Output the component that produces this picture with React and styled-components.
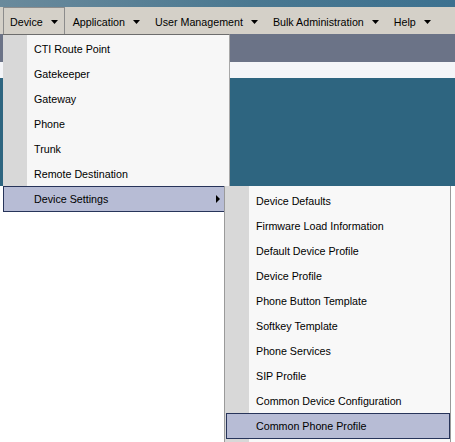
import styled, { createGlobalStyle, css } from 'styled-components'

const GlobalStyle = createGlobalStyle`
  html, body {
    margin: 0;
    padding: 0;
  }
  body {
    width: 455px;
    height: 442px;
    overflow: hidden;
    background: #fff;
    font-family: "Liberation Sans", Arial, sans-serif;
  }
`

const Page = styled.div`
  display: flex;
  flex-direction: column;
  height: 442px;
`

const TitleStrip = styled.div`
  height: 7px;
  background: linear-gradient(90deg, #6a8a9c, #4a7891 55%, #3c7190);
`

const MenuBar = styled.nav`
  height: 27px;
  display: flex;
  align-items: stretch;
  padding-left: 3px;
  background: #d4d0c8;
  position: relative;
  z-index: 2;
`

const BarItem = styled.div`
  position: relative;
  display: flex;
  align-items: center;
  gap: 8px;
  padding: 1px 6px 0;
  margin-right: 1px;
  font-size: 10.7px;
  color: #000;
  white-space: nowrap;
  border: 1px solid ${({ $open }) => ($open ? '#8c8c8c' : 'transparent')};
  border-bottom: none;
`

const DownArrow = () => (
  <svg width="7" height="4" viewBox="0 0 7 4">
    <polygon points="0,0 7,0 3.5,4" fill="#000" />
  </svg>
)

const HeaderBand = styled.div`
  height: 28px;
  background: #6b7387;
`

const WhiteBand = styled.div`
  height: 16px;
  background: #f4f5f8;
`

const Banner = styled.div`
  height: 108px;
  background: #2e6580;
`

const Body = styled.div`
  flex: 1;
  background: #fff;
`

const Dropdown = styled.div`
  position: absolute;
  top: 100%;
  left: -1px;
  width: 227px;
  box-sizing: border-box;
  padding-top: 1px;
  background: linear-gradient(90deg, #d8d8d8 24px, #f7f7f7 24px);
  border-top: 1px solid #6d6d6d;
  border-right: 1px solid #a8a8a8;
`

const Submenu = styled.div`
  position: absolute;
  top: -1px;
  left: 220px;
  width: 227px;
  box-sizing: border-box;
  padding: 2px 0 6px;
  background: linear-gradient(90deg, #d8d8d8 24px, #f8f8f8 24px);
  border-left: 1px solid #9a9a9a;
  border-right: 1px solid #9a9a9a;
`

const MenuItem = styled.div`
  position: relative;
  height: 25px;
  line-height: 23px;
  padding: 2px 0 0 31px;
  box-sizing: border-box;
  font-size: 10.7px;
  color: #000;
  white-space: nowrap;

  ${({ $active }) =>
    $active &&
    css`
      height: 26px;
      line-height: 23px;
      padding: 1px 0 0 30px;
      background: #b7bcd5;
      border: 1px solid #27345a;
    `}
`

const SubItem = styled(MenuItem)`
  ${({ $active }) =>
    $active &&
    css`
      margin-left: 1px;
      padding-left: 29px;
    `}
`

const RightArrow = styled.span`
  position: absolute;
  right: 8px;
  top: 50%;
  margin-top: -4px;
  border-left: 4px solid #000;
  border-top: 4px solid transparent;
  border-bottom: 4px solid transparent;
`

const menus = ['Application', 'User Management', 'Bulk Administration', 'Help']

const deviceItems = [
  'CTI Route Point',
  'Gatekeeper',
  'Gateway',
  'Phone',
  'Trunk',
  'Remote Destination',
]

const settingsItems = [
  'Device Defaults',
  'Firmware Load Information',
  'Default Device Profile',
  'Device Profile',
  'Phone Button Template',
  'Softkey Template',
  'Phone Services',
  'SIP Profile',
  'Common Device Configuration',
  'Common Phone Profile',
]

const App = () => (
  <>
    <GlobalStyle />
    <Page>
      <TitleStrip />
      <MenuBar>
        <BarItem $open>
          Device
          <DownArrow />
          <Dropdown>
            {deviceItems.map(item => (
              <MenuItem key={item}>{item}</MenuItem>
            ))}
            <MenuItem $active>
              Device Settings
              <RightArrow />
              <Submenu>
                {settingsItems.map((item, i) => (
                  <SubItem key={item} $active={i === settingsItems.length - 1}>
                    {item}
                  </SubItem>
                ))}
              </Submenu>
            </MenuItem>
          </Dropdown>
        </BarItem>
        {menus.map(name => (
          <BarItem key={name}>
            {name}
            <DownArrow />
          </BarItem>
        ))}
      </MenuBar>
      <HeaderBand />
      <WhiteBand />
      <Banner />
      <Body />
    </Page>
  </>
)

export default App
